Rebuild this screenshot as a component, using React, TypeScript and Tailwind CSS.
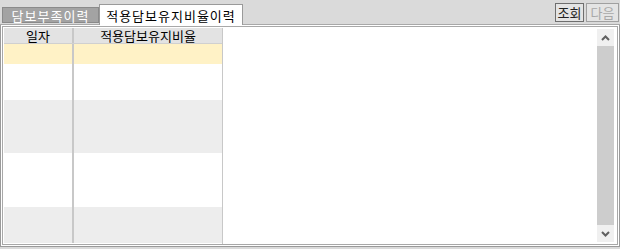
const rows = [
  { h: "h-[20px]", bg: "bg-[#fff2c6]" },
  { h: "h-[36px]", bg: "bg-white" },
  { h: "h-[53px]", bg: "bg-[#ededed]" },
  { h: "h-[54px]", bg: "bg-white" },
  { h: "h-[36px]", bg: "bg-[#ededed]" },
];

function ScrollBar() {
  return (
    <div className="flex w-[17px] flex-col bg-[#f0f0f0]">
      <div className="flex h-[17px] items-center justify-center">
        <svg width="9" height="6" viewBox="0 0 9 6">
          <path d="M1 5 L4.5 1.5 L8 5" fill="none" stroke="#606060" strokeWidth="2" />
        </svg>
      </div>
      <div className="flex-1 bg-[#cdcdcd]" />
      <div className="flex h-[17px] items-center justify-center">
        <svg width="9" height="6" viewBox="0 0 9 6">
          <path d="M1 1 L4.5 4.5 L8 1" fill="none" stroke="#606060" strokeWidth="2" />
        </svg>
      </div>
    </div>
  );
}

export default function App() {
  return (
    <div
      className="flex h-[249px] w-[620px] flex-col bg-[#dadada] text-[12px] leading-none text-black"
      style={{ fontFamily: '"Noto Sans CJK KR", "Noto Sans", sans-serif' }}
    >
      {/* tab strip */}
      <div className="flex h-[24px] items-end pl-[2px]">
        <div className="mb-[1px] flex h-[16px] w-[97px] items-center justify-center border border-[#8a8a8a] bg-[#a3a3a3] text-[13px] tracking-[1px] text-white">
          담보부족이력
        </div>
        <div className="relative top-[1px] flex h-[21px] w-[144px] items-center justify-center border border-b-0 border-[#9a9a9a] bg-white text-[13px] tracking-[1px]">
          적용담보유지비율이력
        </div>
        <div className="ml-auto mb-[1px] flex gap-[2px] self-start pt-[3px] pr-[1px]">
          <button
            type="button"
            className="flex h-[19px] w-[29px] items-center justify-center border border-[#6e6e6e] bg-[#e4e4e4] text-[13px] text-[#222]"
          >
            조회
          </button>
          <button
            type="button"
            className="flex h-[19px] w-[33px] items-center justify-center border border-[#a0a0a0] bg-[#e4e4e4] text-[13px] text-[#a8a8a8]"
          >
            다음
          </button>
        </div>
      </div>

      {/* content */}
      <div className="flex-1 border-t border-[#a8a8a8] bg-[#dadada] pb-[2px]">
        <div className="flex h-full border border-t-0 border-[#9a9a9a] bg-white p-[1px]">
          <div className="flex h-full flex-1 border border-[#a8a8a8] bg-white">
            <div className="ml-[1px] mt-[1px] flex flex-col border-r border-[#c8c8c8]">
              <div className="flex h-[16px] border-b border-[#d0d0d0] bg-[#e3e3e3] text-[13px]">
                <div className="flex w-[70px] items-center justify-center border-r-2 border-[#c8c8c8]">
                  일자
                </div>
                <div className="flex w-[148px] items-center justify-center">
                  적용담보유지비율
                </div>
              </div>
              {rows.map((r, i) => (
                <div key={i} className={`flex ${r.h} ${r.bg}`}>
                  <div className="w-[70px] border-r-2 border-[#c8c8c8]" />
                  <div className="w-[148px]" />
                </div>
              ))}
            </div>
            <div className="flex-1" />
            <div className="flex py-[2px] pr-[3px]">
              <ScrollBar />
            </div>
          </div>
        </div>
      </div>
    </div>
  );
}
